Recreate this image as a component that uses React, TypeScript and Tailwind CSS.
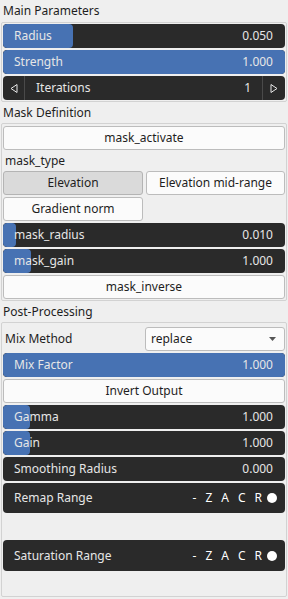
import React from "react";

const font = { fontFamily: '"Noto Sans", "Open Sans", sans-serif' };

function Slider({ label, value, fill, h = "h-[24px]" }: { label: string; value: string; fill: number; h?: string }) {
  return (
    <div className={`relative ${h} rounded-[4px] bg-[#2a2a2a] overflow-hidden flex items-center`}>
      {fill > 0 && (
        <div className="absolute left-0 top-0 bottom-0 bg-[#4772b3] rounded-[4px]" style={{ width: fill }} />
      )}
      <div className="relative flex-1 flex items-center justify-between pl-[11px] pr-[12px] text-[12px] text-[#e6e6e6]">
        <span>{label}</span>
        <span>{value}</span>
      </div>
    </div>
  );
}

function Button({ label, pressed = false, className = "" }: { label: string; pressed?: boolean; className?: string }) {
  return (
    <div
      className={`h-[24px] flex items-center justify-center rounded-[3px] border text-[12px] text-[#1e1e1e] ${
        pressed ? "bg-[#dadada] border-[#b4b4b4]" : "bg-[#fbfbfb] border-[#bcbcbc]"
      } ${className}`}
    >
      {label}
    </div>
  );
}

function RangeRow({ label, h }: { label: string; h: string }) {
  return (
    <div className={`${h} rounded-[4px] bg-[#2a2a2a] flex items-center justify-between pl-[11px] pr-[8px] text-[12px] text-[#e6e6e6]`}>
      <span>{label}</span>
      <span className="flex items-center gap-[9px] text-[12px] text-white">
        <span>-</span>
        <span>Z</span>
        <span>A</span>
        <span>C</span>
        <span>R</span>
        <span className="w-[10px] h-[10px] rounded-full bg-white -ml-[4px]" />
      </span>
    </div>
  );
}

export default function App() {
  return (
    <div className="w-[288px] h-[599px] bg-[#efefef] text-[#1e1e1e] overflow-hidden" style={font}>
      <div className="h-[22px] pl-[3px] flex items-center text-[12px]">Main Parameters</div>
      <div className="mx-[1px] border border-[#d2d2d2] rounded-[2px] px-[1px] pt-[1px] pb-[1px] flex flex-col gap-[2px]">
        <Slider label="Radius" value="0.050" fill={70} />
        <Slider label="Strength" value="1.000" fill={400} />
        <div className="h-[24px] rounded-[4px] bg-[#2a2a2a] flex items-center text-[12px] text-[#e6e6e6]">
          <div className="w-[22px] h-full flex items-center justify-center border-r border-[#4a4a4a]">
            <svg width="8" height="9" viewBox="0 0 8 9">
              <path d="M7 0.5 L1 4.5 L7 8.5 Z" fill="none" stroke="#e6e6e6" strokeWidth="1" />
            </svg>
          </div>
          <div className="flex-1 flex items-center justify-between pl-[11px] pr-[11px]">
            <span>Iterations</span>
            <span>1</span>
          </div>
          <div className="w-[23px] h-full flex items-center justify-center border-l border-[#4a4a4a]">
            <svg width="8" height="9" viewBox="0 0 8 9">
              <path d="M1 0.5 L7 4.5 L1 8.5 Z" fill="none" stroke="#e6e6e6" strokeWidth="1" />
            </svg>
          </div>
        </div>
      </div>

      <div className="h-[21px] pl-[3px] flex items-center text-[12px]">Mask Definition</div>
      <div className="mx-[1px] border border-[#d2d2d2] rounded-[2px] px-[1px] pt-[2px] pb-[1px] flex flex-col gap-[2px]">
        <Button label="mask_activate" />
        <div className="h-[17px] pl-[2px] flex items-center text-[12px]">mask_type</div>
        <div className="flex gap-[3px]">
          <Button label="Elevation" pressed className="w-[140px]" />
          <Button label="Elevation mid-range" className="flex-1" />
        </div>
        <div className="flex">
          <Button label="Gradient norm" className="w-[140px]" />
        </div>
        <Slider label="mask_radius" value="0.010" fill={13} />
        <Slider label="mask_gain" value="1.000" fill={28} />
        <Button label="mask_inverse" />
      </div>

      <div className="h-[21px] pl-[3px] flex items-center text-[12px]">Post-Processing</div>
      <div className="mx-[1px] h-[275px] border border-[#d2d2d2] rounded-[2px] px-[1px] pt-[4px] flex flex-col gap-[2px]">
        <div className="h-[24px] flex items-center">
          <span className="w-[142px] pl-[2px] text-[12px]">Mix Method</span>
          <div className="flex-1 h-[24px] bg-[#fbfbfb] border border-[#bcbcbc] rounded-[3px] flex items-center justify-between pl-[5px] pr-[8px] text-[12px]">
            <span>replace</span>
            <svg width="7" height="4" viewBox="0 0 7 4">
              <path d="M0 0 L7 0 L3.5 4 Z" fill="#555" />
            </svg>
          </div>
        </div>
        <Slider label="Mix Factor" value="1.000" fill={400} />
        <Button label="Invert Output" />
        <Slider label="Gamma" value="1.000" fill={27} />
        <Slider label="Gain" value="1.000" fill={27} />
        <Slider label="Smoothing Radius" value="0.000" fill={0} />
        <RangeRow label="Remap Range" h="h-[30px]" />
        <div className="h-[23px]" />
        <RangeRow label="Saturation Range" h="h-[31px]" />
      </div>
    </div>
  );
}
